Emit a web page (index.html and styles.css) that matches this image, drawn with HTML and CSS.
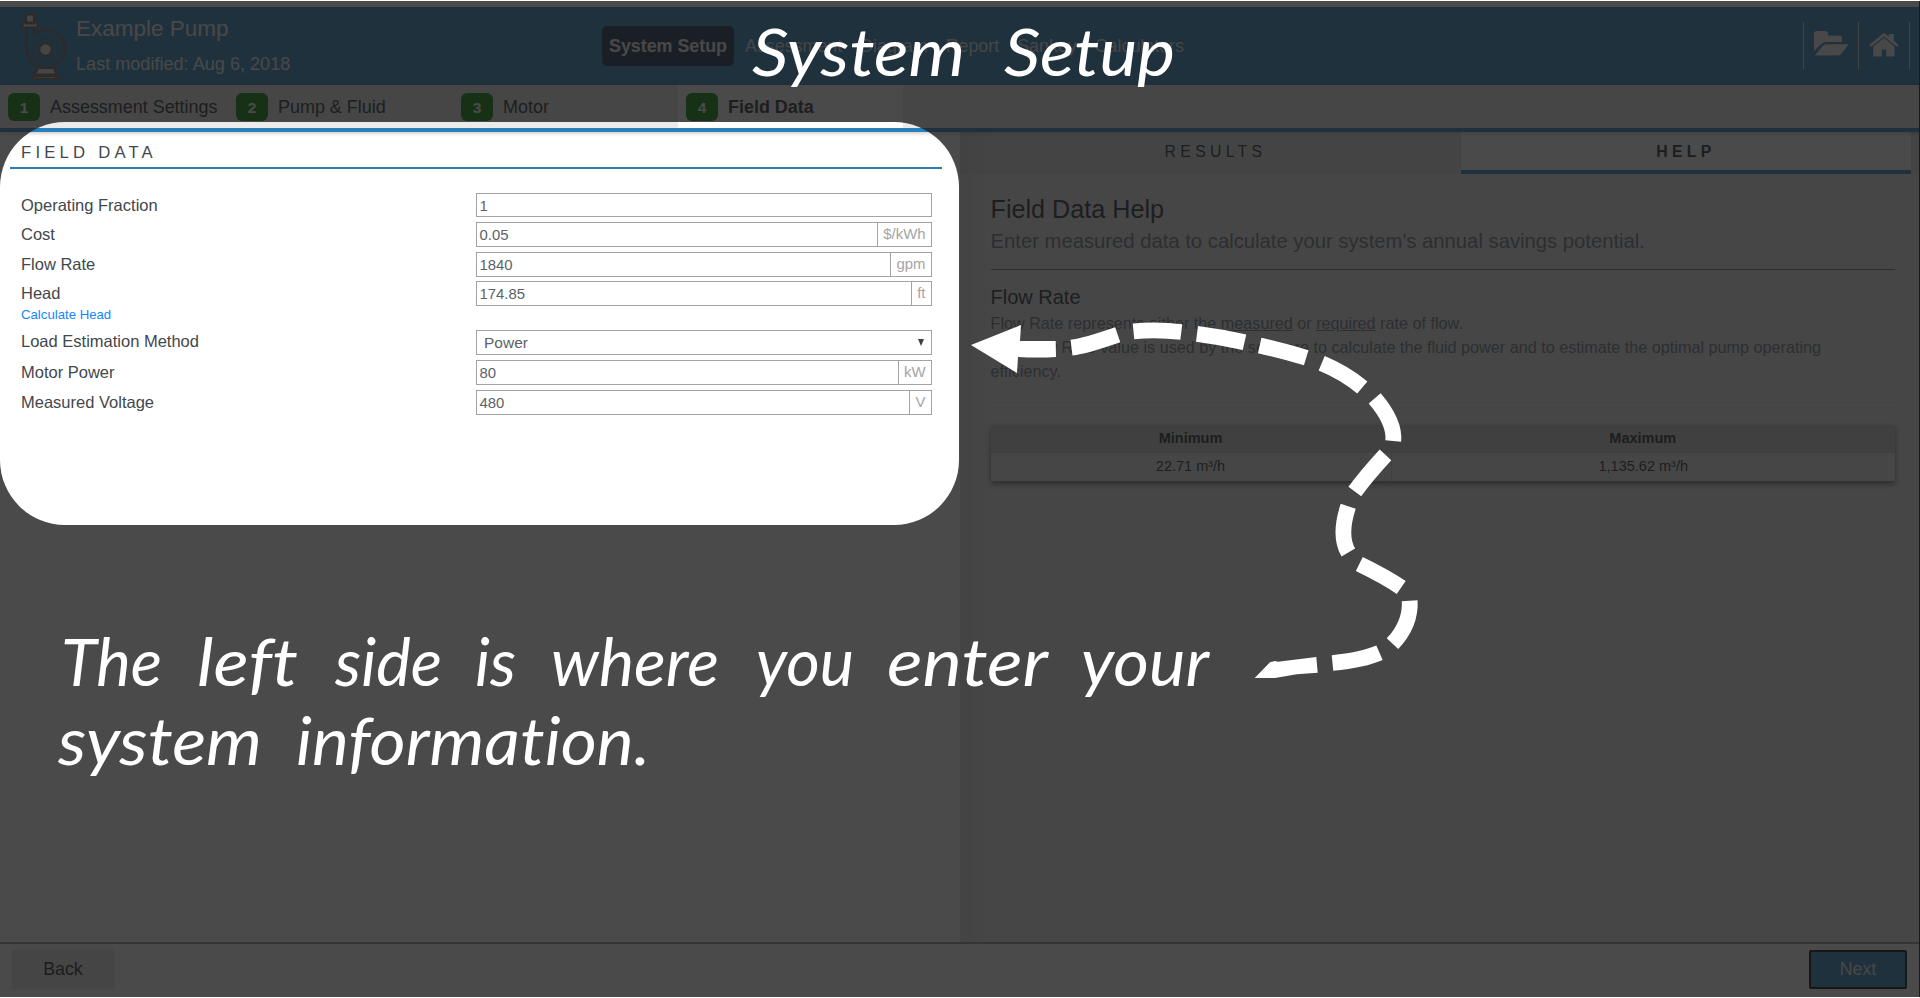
FILE: index.html
```html
<!DOCTYPE html>
<html lang="en">
<head>
<meta charset="utf-8">
<title>Example Pump - System Setup</title>
<link rel="stylesheet" href="styles.css">
</head>
<body>
<div class="app">
  <header class="header">
    <svg class="pump" width="46" height="68" viewBox="0 0 46 68" fill="#e6e6e6" stroke="#6e5f5c" stroke-width="2.2">
      <path fill="#2980b9" d="M5.500 14v22c0 10 9 19 19.500 19s19-9 19-19-9-19-19-19c-5 0-9 1-12.500 4v-7z"/>
      <path d="M5 1.500h8v9H5zM1.500 9.500h15v5h-15z"/>
      <path d="M17 55h16l3 8H13zM11.500 61.500h26v4h-26z"/>
      <circle cx="24.500" cy="36.500" r="6.300"/>
      <path stroke-width="1.100" d="M24.500 22v5M24.500 46v5M9.500 37h5M34.500 37h5M14 26.500l3.500 3.500M31.500 44l3.500 3.500M35 26.500L31.500 30M17.500 44L14 47.500M18.700 23l2 4.500M28.300 46.500l2 4.500M30.300 23l-2 4.500M20.700 46.500l-2 4.500M10.500 31.200l4.500 1.800M34 41l4.500 1.800M38.500 31.200L34 33M15 41l-4.500 1.800"/>
    </svg>
    <div class="heading">
      <div class="title">Example Pump</div>
      <div class="modified">Last modified: Aug 6, 2018</div>
    </div>
    <nav class="nav">
      <a class="nav-item active">System Setup</a><a class="nav-item">Assessment</a><a class="nav-item">Diagram</a><a class="nav-item">Report</a><a class="nav-item">Sankey</a><a class="nav-item">Calculators</a>
    </nav>
    <div class="tools">
      <span class="tool folder"><svg width="34" height="25" viewBox="0 0 34 25" fill="currentColor"><path d="M0 20V3Q0 0 3 0h8q3 0 3 3v1.500h11q3 0 3 3V11H12q-3 0-5 2.200z"/><path d="M1 24.500L8.500 15q1.500-1.800 4-1.800H34q0 1-.8 2l-6 7.700q-1.200 1.600-3.500 1.600z"/></svg></span>
      <span class="tool home"><svg width="30" height="24" viewBox="0 0 30 24" fill="currentColor"><path d="M0 12L14 .500q1-.8 2 0l3.800 3.100V1h5v6.800L29.500 12 28 14 15 3.400 2 14z"/><path d="M4.300 13.600L15 5l10.500 8.600V23.500H17.300V16.500h-4.500v7H4.300z"/></svg></span>
    </div>
  </header>
  <div class="steps">
    <div class="step"><span class="badge">1</span>Assessment Settings</div>
    <div class="step"><span class="badge">2</span>Pump &amp; Fluid</div>
    <div class="step"><span class="badge">3</span>Motor</div>
    <div class="step current"><span class="badge">4</span>Field Data</div>
  </div>
  <main class="main">
    <section class="form-panel">
      <h2 class="form-title">Field Data</h2>
      <div class="form">
        <div class="row r1"><label>Operating Fraction</label><div class="field"><span class="value">1</span></div></div>
        <div class="row"><label>Cost</label><div class="field"><span class="value">0.05</span><span class="unit">$/kWh</span></div></div>
        <div class="row"><label>Flow Rate</label><div class="field"><span class="value">1840</span><span class="unit">gpm</span></div></div>
        <div class="row head"><label>Head<a class="calc">Calculate Head</a></label><div class="field"><span class="value">174.85</span><span class="unit">ft</span></div></div>
        <div class="row select-row"><label>Load Estimation Method</label><div class="field select"><span class="value">Power</span><svg class="caret" width="6" height="7" viewBox="0 0 6 7"><path d="M0 0h6L3 7z" fill="#3b4045"/></svg></div></div>
        <div class="row"><label>Motor Power</label><div class="field"><span class="value">80</span><span class="unit">kW</span></div></div>
        <div class="row"><label>Measured Voltage</label><div class="field"><span class="value">480</span><span class="unit">V</span></div></div>
      </div>
    </section>
    <section class="side-panel">
      <div class="side-tabs"><div class="side-tab">Results</div><div class="side-tab selected">Help</div></div>
      <div class="help">
        <h3 class="help-title">Field Data Help</h3>
        <p class="lead">Enter measured data to calculate your system's annual savings potential.</p>
        <h4 class="topic">Flow Rate</h4>
        <p class="text">Flow Rate represents either the <u>measured</u> or <u>required</u> rate of flow.<br>The Flow Rate value is used by the software to calculate the fluid power and to estimate the optimal pump operating<br>efficiency.</p>
        <div class="limits">
          <div class="th">Minimum</div><div class="th">Maximum</div>
          <div class="td">22.71 m³/h</div><div class="td">1,135.62 m³/h</div>
        </div>
      </div>
    </section>
  </main>
  <footer class="footer"><button class="btn back">Back</button><button class="btn next">Next</button></footer>
  <div class="spotlight"></div>
</div>
<svg class="guide" width="1920" height="998" viewBox="0 0 1920 998">
  <g fill="#fff">
    <path d="M971 345L1021 325 1020 341H1055.700L1056 357Q1038 358 1018 357L1017 373z"/>
    <path d="M1316.300 657L1317.700 672.700 1296.700 674.300 1275 678H1254.700L1270 662.300 1275 661 1278 661.700z"/>
  </g>
  <g fill="none" stroke="#fff" stroke-width="15.800">
    <path d="M1071.500 347.700Q1085 346 1117.700 334.700"/>
    <path d="M1133.500 331.300Q1157 329 1181.300 332"/>
    <path d="M1197 333.800Q1222 337 1244.500 342.200"/>
    <path d="M1259.700 345.500Q1284 351 1306.200 357.700"/>
    <path d="M1321.700 363.300Q1345 373 1362.300 387.500"/>
    <path d="M1374.700 398.300Q1395 422 1393.300 441"/>
    <path d="M1385.500 454.800Q1366 476 1354.800 491.500"/>
    <path d="M1348.200 506.200Q1338.500 536 1348.300 552.500"/>
    <path d="M1359.300 564Q1386 577 1401.200 587.500"/>
    <path d="M1409.700 600.700Q1411 624 1392.500 643.700"/>
    <path d="M1379.500 652.800Q1363 660 1332.500 663"/>
  </g>
  <g class="script">
    <text x="752" y="76" textLength="213" lengthAdjust="spacingAndGlyphs">System</text>
    <text x="1004" y="76" textLength="171" lengthAdjust="spacingAndGlyphs">Setup</text>
    <text x="61" y="686" textLength="101" lengthAdjust="spacingAndGlyphs">The</text>
    <text x="197" y="686" textLength="101" lengthAdjust="spacingAndGlyphs">left</text>
    <text x="335" y="686" textLength="107" lengthAdjust="spacingAndGlyphs">side</text>
    <text x="475" y="686" textLength="41" lengthAdjust="spacingAndGlyphs">is</text>
    <text x="551" y="686" textLength="168" lengthAdjust="spacingAndGlyphs">where</text>
    <text x="756" y="686" textLength="98" lengthAdjust="spacingAndGlyphs">you</text>
    <text x="887" y="686" textLength="161" lengthAdjust="spacingAndGlyphs">enter</text>
    <text x="1081" y="686" textLength="128" lengthAdjust="spacingAndGlyphs">your</text>
    <text x="58" y="765" textLength="204" lengthAdjust="spacingAndGlyphs">system</text>
    <text x="296" y="765" textLength="354" lengthAdjust="spacingAndGlyphs">information.</text>
  </g>
</svg>
</body>
</html>
```
FILE: styles.css
```css
* { box-sizing: border-box; }
body {
  margin: 0;
  padding: 1px 0;
  height: 998px;
  overflow: hidden;
  background: linear-gradient(#0c1d2d, #0c1d2d) right 1px / 1px 996px no-repeat #fff;
  font-family: "Liberation Sans", Arial, sans-serif;
  color: #212529;
}
.app {
  position: relative;
  width: 1919px;
  height: 996px;
  padding-top: 6px;
  overflow: hidden;
  display: flex;
  flex-direction: column;
  background: #fff;
}
h2, h3, h4, p { margin: 0; font-weight: 400; }

.header {
  height: 78px;
  flex: none;
  display: flex;
  background: #2980b9;
  color: #f4f4f4;
}
.pump { margin: 6px 0 0 21px; flex: none; }
.heading { width: 535px; padding: 9px 0 0 9px; }
.title { font-size: 22.500px; line-height: 26px; }
.modified { font-size: 18.100px; line-height: 22px; margin-top: 11px; }
.nav { display: flex; margin-top: 19px; font-size: 17.850px; line-height: 40px; }
.nav-item { padding: 0 7px; margin-right: 4px; height: 40px; opacity: .9; white-space: nowrap; }
.nav-item.active { background: #0b2c48; border-radius: 5px; font-weight: 700; opacity: 1; }
.tools { margin-left: auto; display: flex; margin-top: 15px; height: 47px; margin-right: 9px; }
.tool { border-left: 1.500px solid #ddd; padding-left: 10px; }
.folder { width: 55px; padding-top: 9px; }
.home { width: 52px; padding-top: 11px; border-right: 1.500px solid #ddd; }

.steps {
  height: 47px;
  flex: none;
  display: flex;
  background: #ecebeb;
  border-bottom: 4px solid #2980b9;
  position: relative;
  z-index: 1;
  box-shadow: 0 1px 4px rgba(0, 0, 0, .25);
}
.step { width: 225px; padding: 7px 0 0 8px; display: flex; font-size: 17.950px; line-height: 30px; white-space: nowrap; }
.step:first-child { width: 228px; }
.step.current { background: #fff; font-weight: 700; }
.badge {
  width: 32px; height: 28px; margin: 1px 10px 0 0;
  border-radius: 6px;
  background: #008000;
  color: #fff;
  font-weight: 700; font-size: 15.500px; line-height: 29px; text-align: center;
}

.main { flex: 1; display: flex; min-height: 0; }
.form-panel { width: 960px; padding: 0 18px 0 10px; }
.form-title {
  height: 37px; padding-left: 11px;
  border-bottom: 2px solid #2d7db3;
  font-size: 16.700px; line-height: 41px; letter-spacing: 4.200px;
  text-transform: uppercase; color: #43474b;
}
.form { padding: 24px 10px 0 11px; }
.row { display: flex; justify-content: space-between; height: 29.600px; }
.row.r1 { height: 29px; }
.row.head { height: 48.500px; }
.row.select-row { height: 30.500px; }
label { font-size: 16.500px; line-height: 24px; color: #43474b; }
.calc { display: block; font-size: 13.200px; line-height: 19px; color: #1485ff; }
.select-row label { line-height: 23px; }
.field {
  width: 456px; height: 25px;
  border: 1px solid #a3a3a3;
  display: flex; justify-content: space-between;
  font-size: 14.900px; line-height: 25px; color: #5c6268;
}
.value { padding-left: 2.500px; }
.unit { padding: 0 5.500px; border-left: 1px solid #a3a3a3; color: #a5a5a5; line-height: 23px; }
.r1 .field { height: 24px; }
.select .value { padding-left: 7px; font-size: 15.500px; line-height: 24px; }
.caret { margin: 8px 7px 0 0; }

.side-panel {
  flex: 1;
  background: linear-gradient(90deg, #dedede, #ebebeb 35px);
}
.side-tabs { display: flex; height: 42px; padding-right: 8px; background: rgba(0, 0, 0, .04); }
.side-tab {
  width: 501px; padding-left: 10px; text-align: center;
  font-size: 15.800px; line-height: 39px; letter-spacing: 4.300px; text-transform: uppercase;
}
.side-tab.selected { width: 450px; padding-left: 0; background: #fff; border-bottom: 4px solid #2980b9; font-weight: 700; }
.help { padding: 0 24px 0 30.500px; }
.help-title { font-size: 25.200px; line-height: 30px; padding-top: 20px; }
.lead { font-size: 20.250px; line-height: 28px; height: 46px; padding-top: 3px; color: #6c757d; border-bottom: 1px solid #777; }
.topic { font-size: 20px; line-height: 24px; padding-top: 15px; height: 41px; }
.text { font-size: 16.200px; line-height: 24.200px; height: 92px; color: #6c757d; border-bottom: 1px solid #dcdcdc; }
.limits {
  display: grid;
  grid-template: 28px 28px / 400px 1fr;
  margin-top: 22px; height: 56px;
  box-shadow: 0 3px 6px rgba(0, 0, 0, .55);
  font-size: 14.500px; line-height: 27px; text-align: center;
}
.th { background: #cbcbcb; font-weight: 700; }
.td { background: #ebebeb; }
.td + .td { border-left: 1px solid #cbcbcb; }

.footer {
  height: 55px; flex: none;
  display: flex; justify-content: space-between; align-items: flex-start;
  padding: 6px 12px 0;
  border-top: 2px solid #929292;
  background: #fff;
}
.btn { font: 17.800px/37px "Liberation Sans", Arial, sans-serif; padding: 0; height: 39px; border-radius: 2px; }
.back { width: 102px; border: 0; background: #e4e4e4; color: #222; box-shadow: 0 0 2px #ccc; }
.next { width: 98px; border: 2px solid #000; background: #2980b9; color: #eee; line-height: 33px; }

/* Tour overlay: dims everything outside the highlighted panel */
.spotlight {
  position: absolute; z-index: 2;
  left: 0; top: 121px; width: 959px; height: 403px;
  border-radius: 65px;
  box-shadow: 0 0 0 2000px rgba(29, 29, 29, .8);
}
.guide { position: absolute; z-index: 3; left: 0; top: 0; }
.script {
  font-family: "Segoe Print", "Ink Free", Lato, sans-serif;
  font-style: italic; font-weight: 400; font-size: 65px; fill: #fff;
  font-variant-ligatures: none;
}
```
